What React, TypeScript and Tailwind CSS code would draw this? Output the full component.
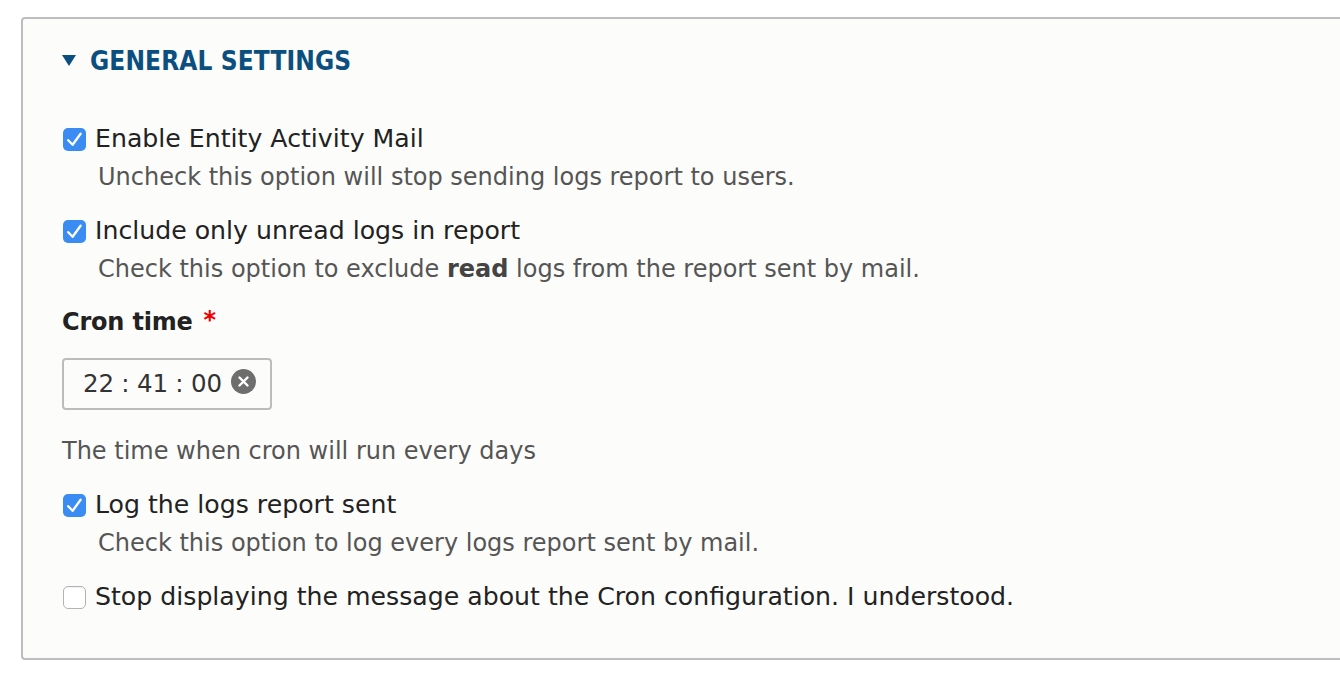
import React from "react";

function Checked() {
  return (
    <span className="flex h-[23px] w-[23px] shrink-0 items-center justify-center rounded-[5px] bg-[#3a8cf3]">
      <svg width="23" height="23" viewBox="0 0 23 23" fill="none">
        <path d="M5.2 12.2 L9.6 16.8 L17.6 5.8" stroke="white" strokeWidth="2.3" strokeLinecap="round" strokeLinejoin="round" />
      </svg>
    </span>
  );
}

function Unchecked() {
  return (
    <span className="block h-[23px] w-[23px] shrink-0 rounded-[5px] border border-[#b3b3b3] bg-white shadow-[inset_0_1px_1px_rgba(0,0,0,0.06)]" />
  );
}

function Item({
  checked,
  label,
  desc,
}: {
  checked: boolean;
  label: string;
  desc?: React.ReactNode;
}) {
  return (
    <div className="flex flex-col">
      <div className="flex h-[30px] items-center">
        <span className="ml-[1px]">{checked ? <Checked /> : <Unchecked />}</span>
        <span className="ml-[9px] text-[25.2px] text-[#222]">{label}</span>
      </div>
      {desc && <div className="mt-[8px] h-[30px] pl-[36px] text-[24px] leading-[30px] text-[#555]">{desc}</div>}
    </div>
  );
}

export default function App() {
  return (
    <div className="h-[678px] w-[1340px] overflow-hidden bg-white pl-[21px] pt-[17px] font-['DejaVu_Sans',sans-serif] text-[24.5px] leading-[30px]">
      <div className="h-[643px] w-[1400px] rounded-tl-[4px] rounded-bl-[4px] border-2 border-[#bdbdbd] bg-[#fcfcfa] pl-[39px] pt-[26px]">
        <div className="flex h-[30px] items-center">
          <svg width="14" height="12" viewBox="0 0 14 12" className="mt-[1px]">
            <polygon points="0,0 14,0 7,11" fill="#0b4f80" />
          </svg>
          <span className="ml-[14px] mt-[2px] font-['DejaVu_Sans_Condensed','DejaVu_Sans',sans-serif] text-[26px] font-bold tracking-[0.1px] text-[#0b4f80]">
            GENERAL SETTINGS
          </span>
        </div>

        <div className="mt-[49px]">
          <Item checked label="Enable Entity Activity Mail" desc="Uncheck this option will stop sending logs report to users." />
        </div>
        <div className="mt-[24px]">
          <Item
            checked
            label="Include only unread logs in report"
            desc={
              <>
                Check this option to exclude <b className="font-bold text-[#444]">read</b> logs from the report sent by mail.
              </>
            }
          />
        </div>

        <div className="mt-[23px] flex h-[30px] items-center">
          <span className="text-[24px] font-bold tracking-[-0.2px] text-[#222]">Cron time</span>
          <span className="ml-[11px] mt-[-4px] text-[24px] font-bold text-[#e00]">*</span>
        </div>

        <div className="mt-[21px] flex h-[52px] w-[210px] items-center rounded-[4px] border-2 border-[#bcbcbc] bg-[#fcfcfa] pl-[19px] pr-[14px]">
          <span className="tracking-[-0.2px] text-[#333]">22 : 41 : 00</span>
          <span className="ml-auto mt-[-5px] flex h-[25px] w-[25px] items-center justify-center rounded-full bg-[#6e6e6e]">
            <svg width="11" height="11" viewBox="0 0 11 11">
              <path d="M1.5 1.5 L9.5 9.5 M9.5 1.5 L1.5 9.5" stroke="white" strokeWidth="2.4" strokeLinecap="round" />
            </svg>
          </span>
        </div>

        <div className="mt-[26px] h-[30px] text-[24px] text-[#555]">The time when cron will run every days</div>

        <div className="mt-[24px]">
          <Item checked label="Log the logs report sent" desc="Check this option to log every logs report sent by mail." />
        </div>
        <div className="mt-[24px]">
          <Item checked={false} label="Stop displaying the message about the Cron configuration. I understood." />
        </div>
      </div>
    </div>
  );
}
